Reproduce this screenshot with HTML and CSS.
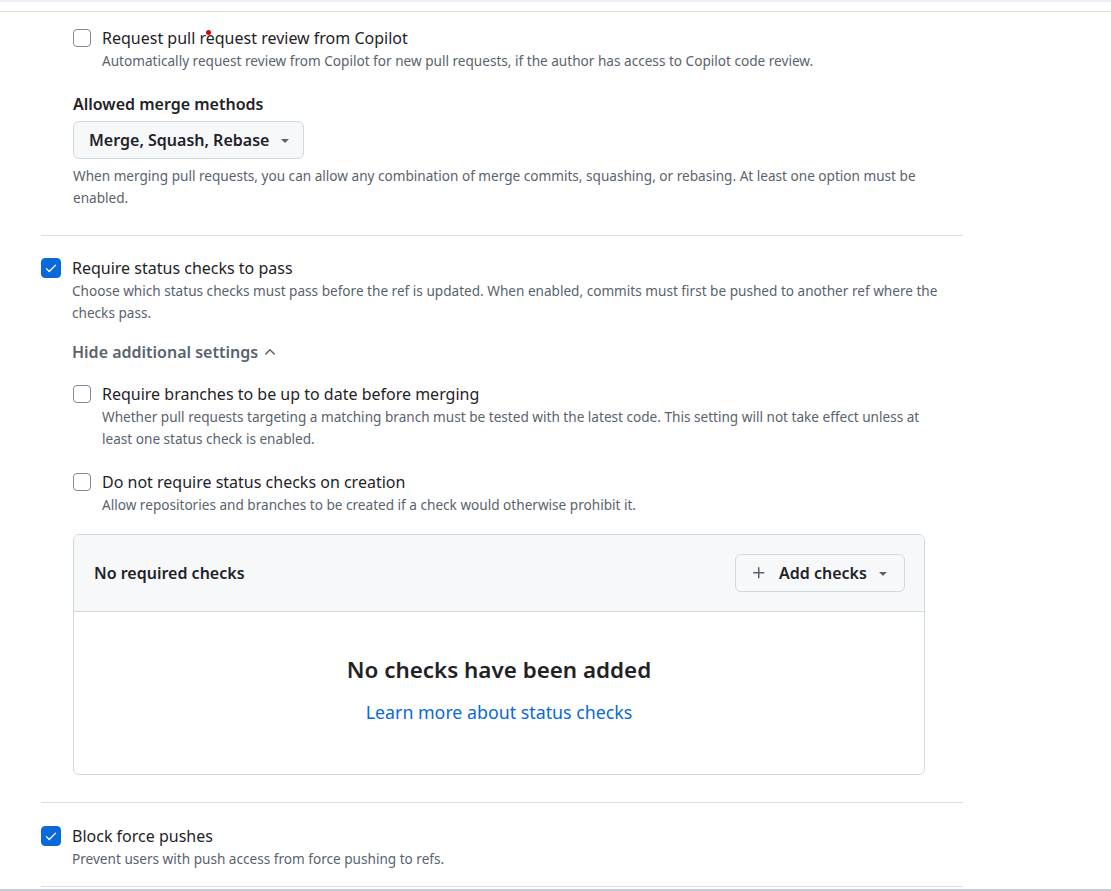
FILE: index.html
```html
<!DOCTYPE html>
<html>
<head>
<meta charset="utf-8">
<link rel="stylesheet" href="styles.css">
</head>
<body>
<div class="topstrip"></div>
<div class="topline"></div>
<span class="cursor-dot"></span>
<main class="content">
  <section class="group indented first">
    <div class="opt">
      <span class="cb"></span>
      <div class="opt-text">
        <div class="opt-title">Request pull request review from Copilot</div>
        <div class="opt-desc">Automatically request review from Copilot for new pull requests, if the author has access to Copilot code review.</div>
      </div>
    </div>
    <div class="field-label">Allowed merge methods</div>
    <button class="btn btn-merge">Merge, Squash, Rebase <svg class="caret" width="16" height="16" viewBox="0 0 16 16"><path d="m4.427 7.427 3.396 3.396a.25.25 0 0 0 .354 0l3.396-3.396A.25.25 0 0 0 11.396 7H4.604a.25.25 0 0 0-.177.427Z"/></svg></button>
    <p class="help">When merging pull requests, you can allow any combination of merge commits, squashing, or rebasing. At least one option must be enabled.</p>
  </section>

  <section class="group">
    <div class="opt">
      <span class="cb checked"><svg width="14" height="14" viewBox="0 0 16 16"><path d="M13.78 4.22a.75.75 0 0 1 0 1.06l-7.25 7.25a.75.75 0 0 1-1.06 0L2.22 9.28a.751.751 0 0 1 .018-1.042.751.751 0 0 1 1.042-.018L6 10.94l6.72-6.72a.75.75 0 0 1 1.06 0Z"/></svg></span>
      <div class="opt-text">
        <div class="opt-title">Require status checks to pass</div>
        <div class="opt-desc">Choose which status checks must pass before the ref is updated. When enabled, commits must first be pushed to another ref where the checks pass.</div>
      </div>
    </div>
    <div class="toggle">Hide additional settings <svg width="16" height="16" viewBox="0 0 16 16"><path d="M3.22 10.53a.749.749 0 0 1 0-1.06l4.25-4.25a.749.749 0 0 1 1.06 0l4.25 4.25a.749.749 0 1 1-1.06 1.06L8 6.81 4.28 10.53a.749.749 0 0 1-1.06 0Z"/></svg></div>
    <div class="sub">
      <div class="opt">
        <span class="cb"></span>
        <div class="opt-text">
          <div class="opt-title">Require branches to be up to date before merging</div>
          <div class="opt-desc">Whether pull requests targeting a matching branch must be tested with the latest code. This setting will not take effect unless at least one status check is enabled.</div>
        </div>
      </div>
      <div class="opt">
        <span class="cb"></span>
        <div class="opt-text">
          <div class="opt-title">Do not require status checks on creation</div>
          <div class="opt-desc">Allow repositories and branches to be created if a check would otherwise prohibit it.</div>
        </div>
      </div>
      <div class="checks-box">
        <div class="checks-head">
          <span class="checks-title">No required checks</span>
          <button class="btn btn-add"><svg class="plus" width="16" height="16" viewBox="0 0 16 16"><path d="M7.75 2a.75.75 0 0 1 .75.75V7h4.25a.75.75 0 0 1 0 1.5H8.5v4.25a.75.75 0 0 1-1.5 0V8.5H2.75a.75.75 0 0 1 0-1.5H7V2.75A.75.75 0 0 1 7.75 2Z"/></svg>Add checks <svg class="caret" width="16" height="16" viewBox="0 0 16 16"><path d="m4.427 7.427 3.396 3.396a.25.25 0 0 0 .354 0l3.396-3.396A.25.25 0 0 0 11.396 7H4.604a.25.25 0 0 0-.177.427Z"/></svg></button>
        </div>
        <div class="checks-body">
          <h3>No checks have been added</h3>
          <a href="#">Learn more about status checks</a>
        </div>
      </div>
    </div>
  </section>

  <section class="group">
    <div class="opt">
      <span class="cb checked"><svg width="14" height="14" viewBox="0 0 16 16"><path d="M13.78 4.22a.75.75 0 0 1 0 1.06l-7.25 7.25a.75.75 0 0 1-1.06 0L2.22 9.28a.751.751 0 0 1 .018-1.042.751.751 0 0 1 1.042-.018L6 10.94l6.72-6.72a.75.75 0 0 1 1.06 0Z"/></svg></span>
      <div class="opt-text">
        <div class="opt-title">Block force pushes</div>
        <div class="opt-desc">Prevent users with push access from force pushing to refs.</div>
      </div>
    </div>
  </section>
  <div class="endline"></div>
</main>
<div class="bottomline"></div>
</body>
</html>
```

FILE: styles.css
```css
* { box-sizing: border-box; }
html, body { margin: 0; padding: 0; background: #fff; }
body {
  font-family: "Noto Sans", "Liberation Sans", sans-serif;
  color: #1f2328;
  width: 1111px;
  height: 891px;
  overflow: hidden;
  position: relative;
}
.topstrip { height: 2px; background: #eef0f8; }
.topline { height: 10px; border-bottom: 1px solid #dcdcdc; }
.cursor-dot {
  position: absolute; left: 206px; top: 30px;
  width: 5px; height: 5px; border-radius: 50%; background: #e00000;
}
.content { margin-left: 41px; width: 922px; }
.group { border-top: 1px solid #d8dee4; padding-top: 22px; padding-bottom: 27px; }
.group.first { border-top: none; padding-top: 16px; padding-bottom: 26px; }
.indented { padding-left: 32px; }
.opt { display: flex; gap: 11px; align-items: flex-start; }
.cb {
  flex: none; width: 18px; height: 18px; margin-top: 1px;
  border: 1px solid #818b98; border-radius: 4px; background: #fff;
  display: flex; align-items: center; justify-content: center;
}
.cb.checked { width: 20px; height: 20px; margin-top: 0; background: #0969da; border-color: #0969da; }
.cb.checked svg { fill: #fff; }
.opt-text { flex: 1; padding-right: 20px; }
.opt-title { font-size: 16px; line-height: 20px; }
.opt-desc { font-size: 13.6px; line-height: 22px; color: #59636e; margin-top: 2px; }
.field-label { font-size: 16px; line-height: 20px; font-weight: 600; margin-top: 22px; }
.btn {
  font-family: inherit; color: #1f2328;
  display: inline-flex; align-items: center;
  height: 38px; border: 1px solid #d1d9e0; border-radius: 6px;
  background: #f6f8fa; font-size: 16px; font-weight: 600;
}
.btn .caret { fill: #59636e; margin-left: 8px; }
.btn-merge { margin-top: 7px; padding: 0 10px 0 15px; }
.help { margin: 6px 0 0; font-size: 13.6px; line-height: 22px; color: #59636e; padding-right: 20px; }
.toggle {
  margin-top: 18px; margin-left: 31px;
  font-size: 16px; line-height: 20px; font-weight: 600; color: #59636e;
  display: flex; align-items: center; gap: 4px;
}
.toggle svg { fill: #59636e; }
.sub { margin-left: 32px; }
.sub .opt { margin-top: 22px; }
.checks-box {
  margin-top: 18px; width: 852px;
  border: 1px solid #d1d9e0; border-radius: 6px; overflow: hidden;
}
.checks-head {
  height: 77px; background: #f6f8fa; border-bottom: 1px solid #d1d9e0;
  display: flex; align-items: center; justify-content: space-between;
  padding: 0 19px 0 20px;
}
.checks-title { font-size: 16px; font-weight: 600; }
.btn-add { padding: 0 12px 0 15px; width: 170px; }
.btn-add .plus { fill: #59636e; margin-right: 12px; }
.checks-body { height: 162px; text-align: center; padding-top: 42px; }
.checks-body h3 { margin: 0; font-size: 22.4px; line-height: 32px; font-weight: 600; }
.checks-body a { display: inline-block; margin-top: 14px; font-size: 17.8px; line-height: 24px; color: #0969da; text-decoration: none; }
.group:last-of-type { padding-top: 23px; padding-bottom: 16px; }
.endline { border-top: 1px solid #d8dee4; }
.bottomline { position: absolute; left: 0; right: 0; top: 889px; height: 2px; background: #c8ccd4; }
```
